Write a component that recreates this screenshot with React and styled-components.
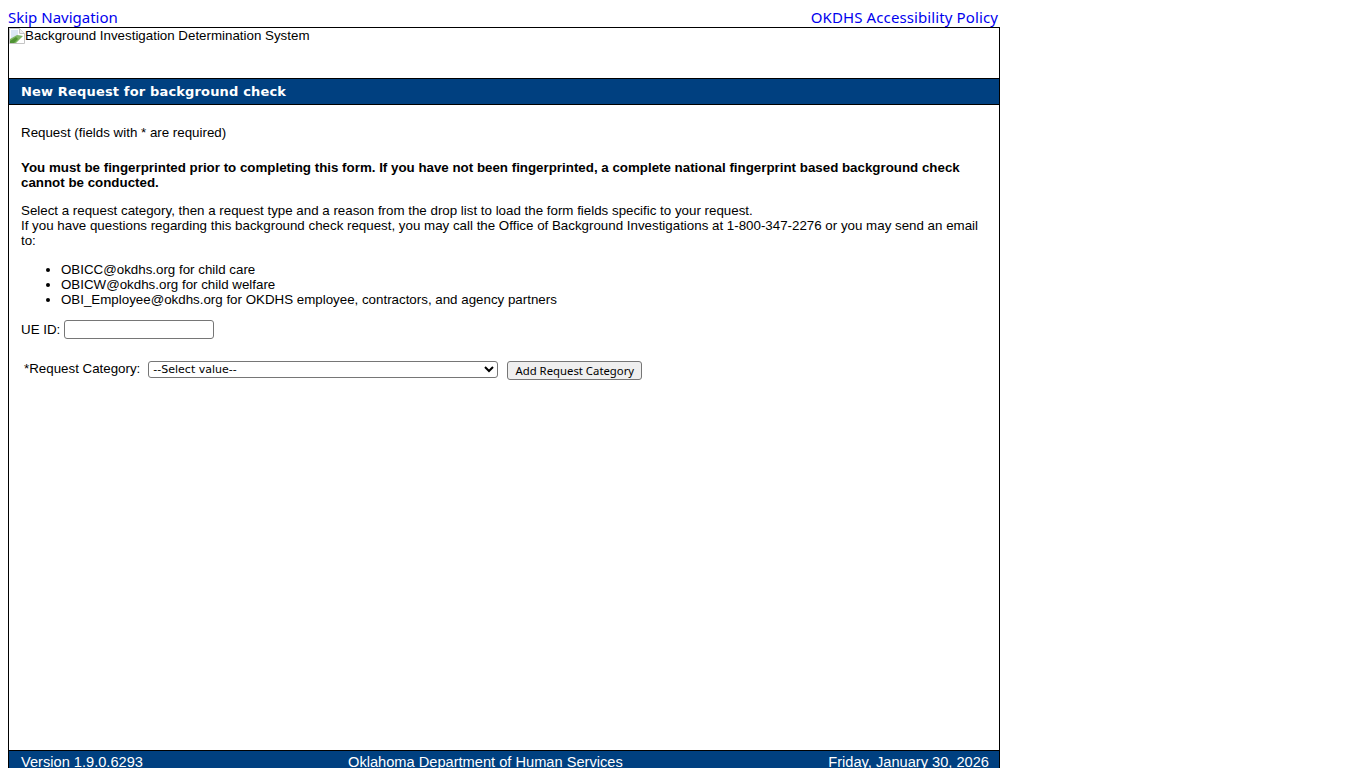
import React from "react";
import styled, { createGlobalStyle } from "styled-components";

const Global = createGlobalStyle`
  html, body { margin: 0; padding: 0; background: #fff; height: 768px; overflow: hidden; }
  body { padding: 8px 0 0 8px; box-sizing: border-box; font-family: "Liberation Sans", Arial, sans-serif; font-size: 13.33px; color: #000; }
`;
const Page = styled.div`width: 992px;`;
const TopLinks = styled.div`
  display: flex; justify-content: space-between; height: 19px; padding-right: 2px;
  font-family: "Noto Sans", Tahoma, sans-serif; font-size: 15px; line-height: 19px;
`;
const TopLink = styled.a`color: #0000ee; text-decoration: none; letter-spacing: ${p => p.$track || 0}px;`;
const Frame = styled.div`
  border: 1px solid #000; height: 760px; box-sizing: border-box; display: flex; flex-direction: column;
`;
const Banner = styled.div`height: 50px; display: flex; align-items: flex-start; line-height: 15px; flex: none;`;
const BrokenIcon = styled.svg`width: 16px; height: 16px; flex: none;`;
const TitleBar = styled.h1`
  flex: none; margin: 0; height: 25px; background: #004080; border-top: 1px solid #000; border-bottom: 1px solid #000;
  color: #fff; font: bold 13px/25px "DejaVu Sans", Verdana, sans-serif; letter-spacing: 0.16px; padding-left: 12px;
`;
const Main = styled.main`flex: 1; padding: 20px 12px 0; line-height: 15px;`;
const Para = styled.p`margin: 0 0 ${p => p.$after}px;`;
const Bold = styled.p`margin: 0 0 13px; font-weight: bold;`;
const EmailList = styled.ul`margin: 0 0 13px; padding-left: 40px;`;
const UeRow = styled.div`display: flex; align-items: center; height: 19px; gap: 4px; margin-bottom: 21px;`;
const TextBox = styled.input`
  width: 150px; height: 19px; box-sizing: border-box; border: 1px solid #767676; border-radius: 3px; padding: 0 2px; background: #fff;
`;
const RequestRow = styled.div`display: flex; align-items: flex-start; padding-left: 3px;`;
const RequestLabel = styled.label`line-height: 15px; margin-right: 8px; margin-top: 1px;`;
const Select = styled.select`
  width: 350px; height: 17px; margin: 1px 9px 0 0; box-sizing: border-box; border: 1px solid #767676; border-radius: 3px; background: #fff;
  font: 11px "DejaVu Sans", Tahoma, sans-serif; padding: 0;
`;
const Button = styled.button`
  width: 135px; height: 19px; margin-top: 1px; box-sizing: border-box; border: 1px solid #767676; border-radius: 3px; background: #efefef;
  font: 11.33px "Noto Sans", Tahoma, sans-serif; padding: 0; color: #000;
`;
const Footer = styled.footer`
  flex: none; height: 36px; background: #004080; border-top: 1px solid #000; color: #fff; box-sizing: border-box;
  display: grid; grid-template-columns: 327px 1fr auto; padding: 3px 10px 0 12px; line-height: 17px; font-size: 14.64px;
  margin-top: auto;
`;

const Broken = () => (
  <BrokenIcon viewBox="0 0 16 16">
    <path d="M0.5 0.5H10.5L15.5 5.5V15.5H0.5Z" fill="#fff" stroke="#c4c4c4" />
    <path d="M10.5 0.5V5.5H15.5" fill="#eeeeee" stroke="#c4c4c4" />
    <path d="M2 2H9V7H13L3 11H2Z" fill="#dbe7f5" />
    <path d="M1 15V11L8 7L14 8L7 15Z" fill="#7fb765" />
    <path d="M1 15V13L7 9L9 11L5 15Z" fill="#4f9333" />
  </BrokenIcon>
);

export default function App() {
  return (
    <Page>
      <Global />
      <TopLinks>
        <TopLink href="#main">Skip Navigation</TopLink>
        <TopLink href="#policy" $track={0.11}>OKDHS Accessibility Policy</TopLink>
      </TopLinks>
      <Frame>
        <Banner><Broken />Background Investigation Determination System</Banner>
        <TitleBar>New Request for background check</TitleBar>
        <Main id="main">
          <Para $after={20}>Request (fields with * are required)</Para>
          <Bold>You must be fingerprinted prior to completing this form. If you have not been fingerprinted, a complete national fingerprint based background check cannot be conducted.</Bold>
          <Para $after={14}>
            Select a request category, then a request type and a reason from the drop list to load the form fields specific to your request.<br />
            If you have questions regarding this background check request, you may call the Office of Background Investigations at 1-800-347-2276 or you may send an email to:
          </Para>
          <EmailList>
            <li>OBICC@okdhs.org for child care</li>
            <li>OBICW@okdhs.org for child welfare</li>
            <li>OBI_Employee@okdhs.org for OKDHS employee, contractors, and agency partners</li>
          </EmailList>
          <UeRow>
            <label htmlFor="ue">UE ID:</label>
            <TextBox id="ue" type="text" />
          </UeRow>
          <RequestRow>
            <RequestLabel htmlFor="cat">*Request Category:</RequestLabel>
            <Select id="cat"><option>--Select value--</option></Select>
            <Button type="button">Add Request Category</Button>
          </RequestRow>
        </Main>
        <Footer>
          <span>Version 1.9.0.6293</span>
          <span>Oklahoma Department of Human Services</span>
          <span>Friday, January 30, 2026</span>
        </Footer>
      </Frame>
    </Page>
  );
}
